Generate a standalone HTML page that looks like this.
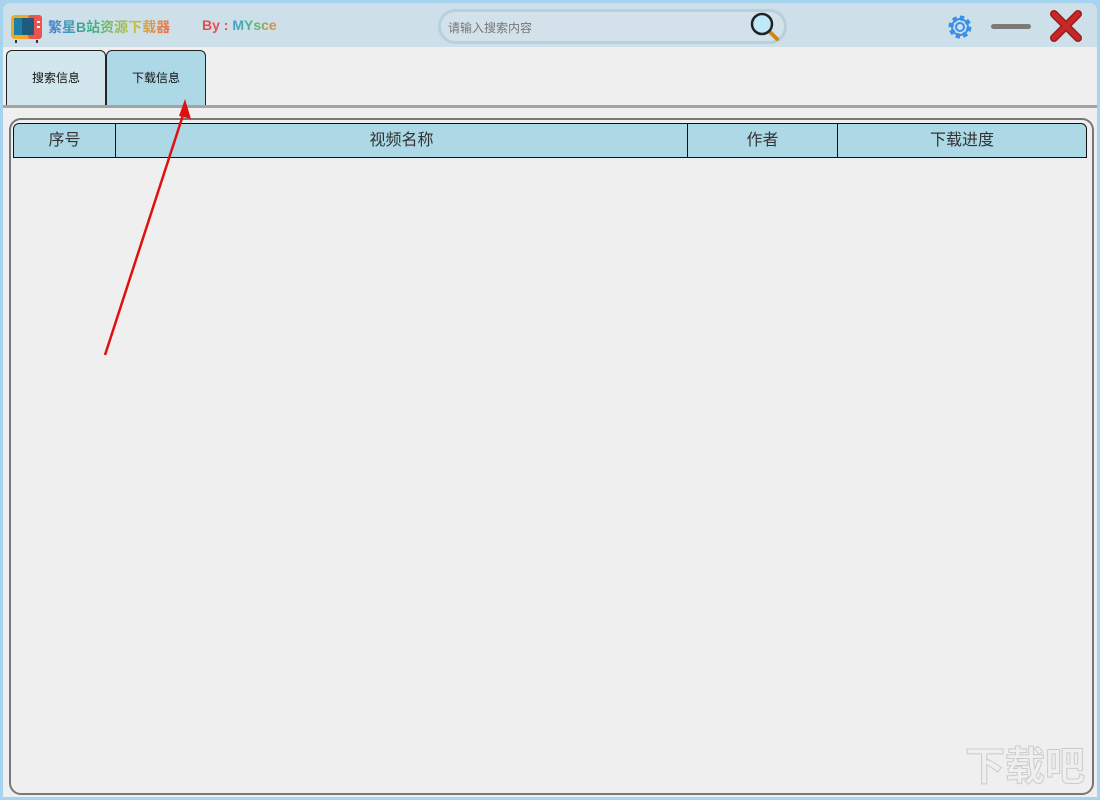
<!DOCTYPE html>
<html><head><meta charset="utf-8"><style>
*{margin:0;padding:0;box-sizing:border-box}
html,body{width:1100px;height:800px;overflow:hidden}
body{background:#a6d3ee;font-family:"Liberation Sans","Noto Sans CJK SC",sans-serif;position:relative}
.win{position:absolute;left:3px;top:3px;width:1094px;height:794px;background:#efefef;border-radius:8px 8px 0 0;overflow:hidden}
.title{position:absolute;left:0;top:0;width:100%;height:44px;background:#cddfe8}
.tab{position:absolute;top:47px;height:55px;border:1px solid #222;border-bottom:none;border-radius:6px 6px 0 0;font-size:12px;text-align:center;line-height:54px;color:#111}
.line{position:absolute;left:0;top:102px;width:1094px;height:3px;background:#a3a3a3}
.panel{position:absolute;left:6px;top:115px;width:1085px;height:677px;border:2px solid #777;border-radius:12px}
.hd{position:absolute;top:120px;height:35px;background:#add8e6;border:1px solid #111;font-size:16px;color:#333;text-align:center;line-height:33px}
</style></head><body>
<div class="win">
<div class="title">
<svg style="position:absolute;left:7px;top:10px" width="34" height="30"><rect x="1" y="2" width="31" height="24" rx="4" fill="#f5a623"/><rect x="18" y="2" width="14" height="24" rx="3" fill="#ef5350"/><rect x="4" y="5" width="20" height="17" fill="#1b7fa6"/><rect x="12" y="5" width="12" height="17" fill="#1d5c7d"/><rect x="27" y="8" width="3" height="2" fill="#fff"/><rect x="27" y="13" width="3" height="2" fill="#fff"/><rect x="5" y="27" width="2" height="3" fill="#333"/><rect x="26" y="27" width="2" height="3" fill="#333"/></svg>
<div style="position:absolute;left:45px;top:14px;font-size:14px;font-weight:bold;background:linear-gradient(90deg,#4a7fd8,#3bb08a 35%,#c5c23b 70%,#f26a4f);-webkit-background-clip:text;color:transparent">繁星B站资源下载器</div>
<div style="position:absolute;left:199px;top:14px;font-size:14px;font-weight:bold;background:linear-gradient(90deg,#e94c4c 35%,#3aa0d8 40%,#59b87a 70%,#f08a3a);-webkit-background-clip:text;color:transparent">By : MYsce</div>
<div style="position:absolute;left:435px;top:6px;width:349px;height:35px;border:3px solid #b7d0dd;border-radius:18px;background:#d3e2ea"></div>
<div style="position:absolute;left:445px;top:16px;font-size:12px;color:#777">请输入搜索内容</div>
<svg style="position:absolute;left:746px;top:8px" width="32" height="32"><line x1="18" y1="18" x2="28" y2="28" stroke="#c9881f" stroke-width="4" stroke-linecap="round"/><circle cx="13" cy="13" r="10" fill="#bfe9f7" stroke="#222" stroke-width="2.5"/></svg>
<svg style="position:absolute;left:943px;top:10px" width="28" height="28"><circle cx="14" cy="14" r="9" fill="none" stroke="#3a8fe8" stroke-width="5" stroke-dasharray="4 3"/><circle cx="14" cy="14" r="8" fill="none" stroke="#3a8fe8" stroke-width="2"/><circle cx="14" cy="14" r="4" fill="none" stroke="#3a8fe8" stroke-width="2"/></svg>
<div style="position:absolute;left:988px;top:21px;width:40px;height:5px;border-radius:3px;background:#7a7a7a"></div>
<svg style="position:absolute;left:1046px;top:6px" width="34" height="34"><path d="M5 5L29 29M29 5L5 29" stroke="#9e1c1c" stroke-width="8" stroke-linecap="round"/><path d="M5 5L29 29M29 5L5 29" stroke="#c62828" stroke-width="5" stroke-linecap="round"/></svg>
</div>
<div class="tab" style="left:3px;width:100px;background:#d2e6ee">搜索信息</div>
<div class="tab" style="left:103px;width:100px;background:#add8e6">下载信息</div>
<div class="line"></div>
<div class="panel"></div>
<div class="hd" style="left:10px;width:103px;border-radius:6px 0 0 0">序号</div>
<div class="hd" style="left:112px;width:573px">视频名称</div>
<div class="hd" style="left:684px;width:151px">作者</div>
<div class="hd" style="left:834px;width:250px;border-radius:0 6px 0 0">下载进度</div>
<svg style="position:absolute;left:0;top:0" width="1094" height="794"><line x1="102" y1="352" x2="182" y2="106" stroke="#e01010" stroke-width="2.5"/><path d="M182 96L188 116L176 113Z" fill="#e01010"/></svg>
<div style="position:absolute;left:962px;top:742px;font-size:40px;line-height:44px;white-space:nowrap;font-weight:bold;color:transparent;-webkit-text-stroke:1px #ccc">下载吧</div>
</div>
</body></html>
